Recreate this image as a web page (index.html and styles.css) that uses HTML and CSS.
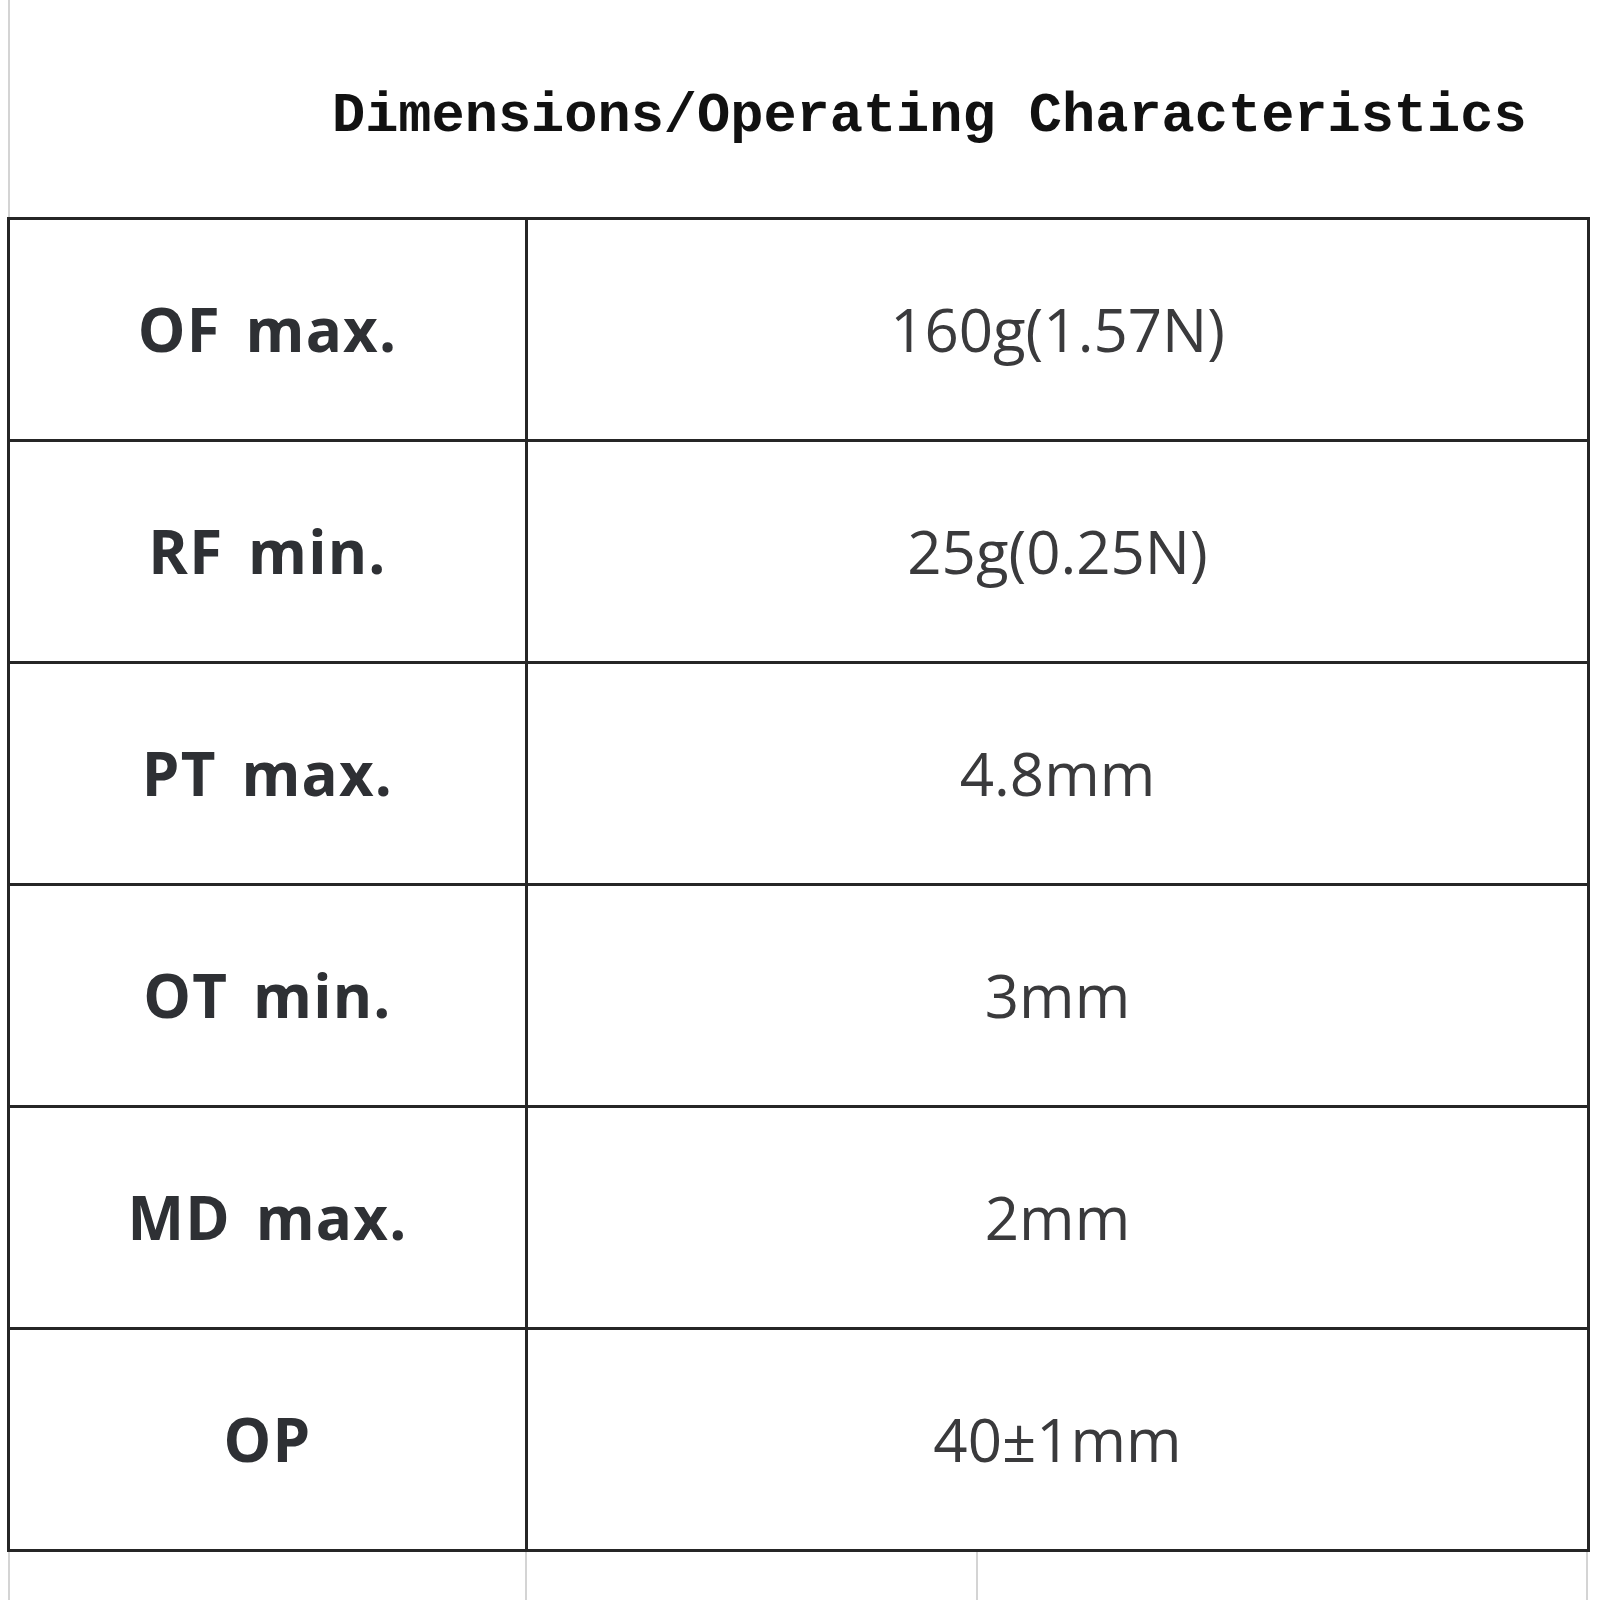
FILE: index.html
```html
<!DOCTYPE html>
<html>
<head>
<meta charset="utf-8">
<link rel="stylesheet" href="styles.css">
</head>
<body>
<div class="sheet">
  <div class="title-row">
    <h1 class="title">Dimensions/Operating Characteristics</h1>
  </div>
  <table class="spec">
    <colgroup><col class="c1"><col class="c2"></colgroup>
    <tr><th>OF max.</th><td>160g(1.57N)</td></tr>
    <tr><th>RF min.</th><td>25g(0.25N)</td></tr>
    <tr><th>PT max.</th><td>4.8mm</td></tr>
    <tr><th>OT min.</th><td>3mm</td></tr>
    <tr><th>MD max.</th><td>2mm</td></tr>
    <tr><th>OP</th><td>40±1mm</td></tr>
  </table>
  <div class="grid-row">
    <div class="gcell g1"></div>
    <div class="gcell g2"></div>
    <div class="gcell g3"></div>
  </div>
</div>
</body>
</html>
```
FILE: styles.css
```css
html, body {
  margin: 0;
  padding: 0;
  background: #ffffff;
}
.sheet {
  width: 1600px;
  height: 1600px;
  overflow: hidden;
}
.title-row {
  height: 217px;
  margin-left: 8px;
  border-left: 2px solid #d4d4d4;
  box-sizing: border-box;
  display: flex;
  align-items: flex-start;
}
.title {
  margin: 82px 0 0 322px;
  font-family: "Liberation Mono", "DejaVu Sans Mono", monospace;
  font-weight: bold;
  font-size: 55.3px;
  line-height: 70px;
  color: #111;
  white-space: nowrap;
}
.spec {
  margin-left: 7px;
  border-collapse: collapse;
  table-layout: fixed;
  width: 1580px;
}
.c1 { width: 518px; }
.c2 { width: 1062px; }
.spec th, .spec td {
  border: 3px solid #262626;
  height: 217px;
  padding: 0 0 2px 0;
  text-align: center;
  vertical-align: middle;
  font-family: "Open Sans", "DejaVu Sans", sans-serif;
  font-size: 60px;
  line-height: 1;
}
.spec th {
  font-weight: bold;
  color: #2e3034;
  letter-spacing: 1.2px;
  word-spacing: 8px;
}
.spec td {
  font-weight: normal;
  color: #3a3a3c;
}
.grid-row {
  display: flex;
  height: 60px;
  margin-left: 8px;
}
.gcell {
  border-left: 2px solid #d4d4d4;
  box-sizing: border-box;
}
.g1 { width: 517px; }
.g2 { width: 451px; }
.g3 { width: 612px; border-right: 2px solid #d4d4d4; }
```
